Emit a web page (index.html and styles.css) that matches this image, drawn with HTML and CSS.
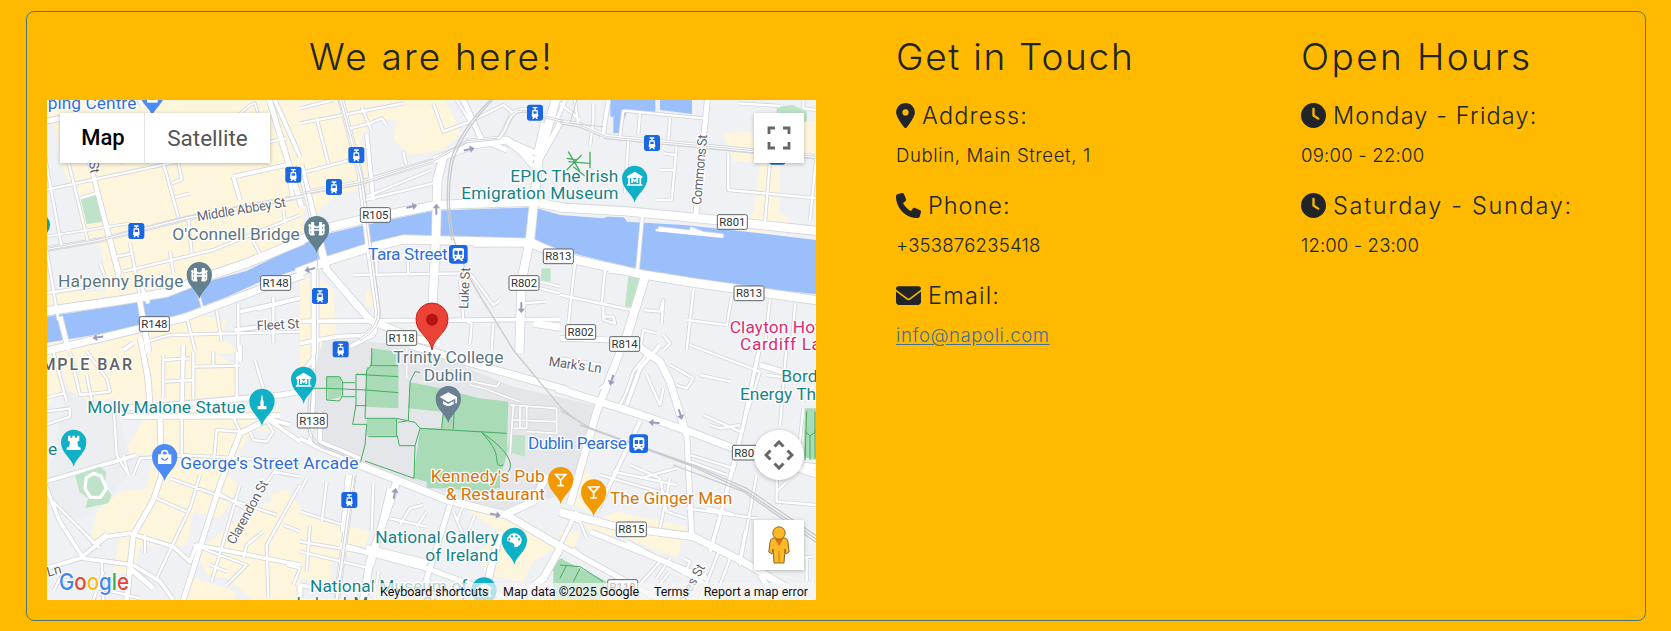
FILE: index.html
```html
<!DOCTYPE html>
<html lang="en">
<head>
<meta charset="utf-8">
<title>Contact</title>
<link rel="stylesheet" href="styles.css">
</head>
<body>
<main class="card">
<section class="find">
<h2 class="title"><span class="t-here">We are here!</span></h2>
<div class="map">
<svg class="map-canvas" viewBox="0 0 2307 1500">
<defs>
<path id="pin" d="M0 73C-6 48-38 32-38 0A38 38 0 0 1 38 0C38 32 6 48 0 73Z"/>
<g id="bridge" fill="none" stroke="#fff" stroke-width="6"><path d="M-12-20V20M12-20V20" stroke-width="9"/><path d="M-24-12Q-18-4-12-12Q0 4 12-12Q18-4 24-12M-24 4H24M-20 17H-6M6 17H20M-21-14V17M21-14V17" stroke-width="5"/></g>
<g id="museum"><path d="M-23-8L0-22L23-8V-3H-23Z" fill="#fff"/><path d="M-17-4V18M17-4V18M-23 18H23M-8 12V-1L0 7L8-1V12" fill="none" stroke="#fff" stroke-width="5"/></g>
<g id="tram"><rect x="-24" y="-24" width="48" height="48" rx="8" fill="#1967e2"/><path d="M-7-15H7M0-15V-8" stroke="#fff" stroke-width="4"/><path d="M-8-8H8L10 11L6 14L9 19H4L2 15H-2L-4 19H-9L-6 14L-10 11Z" fill="#fff"/><path d="M-5-4H5V3H-5Z" fill="#1967e2"/></g>
<g id="train"><rect x="-28" y="-28" width="56" height="56" rx="10" fill="#1967e2"/><path d="M-17-12Q-17-19-9-19H9Q17-19 17-12V9Q17 14 11 15L15 20H8L4 15H-4L-8 20H-15L-11 15Q-17 14-17 9Z" fill="#fff"/><path d="M-12-11H-2V1H-12ZM2-11H12V1H2ZM-11 6H-6V10H-11ZM6 6H11V10H6Z" fill="#1967e2"/></g>
<g id="glass" fill="none" stroke="#fff" stroke-width="5"><path d="M-15-15H15L0 2ZM0 2V18M-10 18H10"/></g>
<path id="arrow" d="M-16-3H3V-11L17 0L3 11V3H-16Z" fill="#9a9cbc"/>

<g id="streets">
<g transform="translate(-21 -30)">
<path class="w8" d="M15 200L65 470M85 215L145 460M120 325L175 308M15 300L740 145M240 215L300 205M370 220L415 380M395 280L425 268L415 220M405 322L450 310M270 460L330 780M230 500L280 490M250 545L520 480L780 375M180 520L195 560M390 485L400 550M445 385L455 490M640 455L665 500M730 360L735 400M15 610L150 590M20 480L55 690M440 680L465 780M595 640V780M700 620V760M530 660L545 755M650 660L780 625M300 760L390 735L780 725"/>
<path class="w12" d="M145 200L240 555M150 220L245 600M580 260L740 225L760 330M580 260L600 330M700 20L780 200M290 20L310 50M300 580L325 640M250 780L280 760M585 720L740 700M600 665L780 625"/>
<path class="w14" d="M60 680L85 780M300 635L325 790M685 20L785 350M15 95L60 85"/>
<path class="w7" d="M476 615L492 668M590 80L630 45L645 40L660 90M15 440L270 400"/>
<path class="w12" d="M15 478L180 450L440 385L790 318"/>
<path class="w24" d="M10 665L250 630L380 608L500 560L620 520L790 450"/>
<path class="w20" d="M10 785L250 728L430 684L560 635L680 590L790 555"/>
</g>
<g transform="translate(759 -30)">
<path class="w8" d="M0 100L310 40M50 85L85 220M0 250L170 205M150 115L210 100L245 85L260 105M185 50L215 125M310 185L318 222M195 330L400 280M400 40L430 125L510 95M470 30L510 95L610 45L640 70M160 555L500 550M230 550L228 470M320 470L325 550M480 570L490 690L515 700L510 760M510 550L580 645L600 630M580 700L575 780M670 640L735 635M660 580L780 610M200 320L395 240M660 560L780 590M425 345L780 345M100 30L0 55"/>
<path class="w12" d="M0 694L780 688M0 310L180 278L400 212M780 95L690 60Q650 55 635 75L600 145L500 155M0 760L110 740L220 735M200 690Q240 700 220 735L150 770M220 330L200 130"/>
<path class="w14" d="M122 25L180 250L205 470L232 660Q240 720 180 745M780 100L705 235M640 160L700 230M640 160L710 190L730 100M490 30L545 150L620 180"/>
<path class="w20" d="M0 225L80 540L210 690L340 745L420 760M45 540V790M400 210L520 165L620 150L700 210M520 460L700 458L780 505M700 700L780 712"/>
<path class="w24" d="M-10 455L90 412L190 388L410 345L690 335L790 352M-10 548L90 510L200 475L310 448L690 458L790 500M430 200L412 270L408 440L395 700M770 20L715 210L690 450L665 570L658 790"/>
</g>
<g transform="translate(1539 -30)">
<path class="w8" d="M45 30L55 110M100 40V90L90 170M190 60L180 140M190 62L430 85M240 70L235 130M330 85L325 150M205 150L195 310M350 170L335 330H285M310 190L345 195M300 240H340M505 190V300L770 325M630 215L615 395M770 190L750 390M535 40L660 48M730 30V55L768 60M0 40L60 90M145 545L195 550M250 660L300 665L310 630L305 700M130 640V690L165 700L160 680L130 680M400 600L380 780M515 620L500 710M380 690L500 705M630 630L615 760M705 640L695 780M45 520L25 700M135 540L125 640M0 615L215 660M290 730L250 720L240 780M310 735L330 760L310 780"/>
<path class="w12" d="M0 95L60 105L140 140L580 183L780 202M15 30L-10 90M145 30L130 130L125 145"/>
<path class="w14" d="M443 20L407 380M0 745L160 750L240 775M260 560L200 750"/>
<path class="w9" d="M247 380L232 545M295 415L490 437M390 415L430 430"/>
<path class="w24" d="M-10 352L200 364L470 390L780 424M-10 497L240 552L400 578L780 632M255 560L200 740"/>
</g>
<g transform="translate(-21 735)">
<path class="w8" d="M90 20L120 150L210 140L200 100L140 20M40 20L80 170M15 160L70 145M15 200L90 190M90 190V215L15 240M140 90L160 190M220 170L230 330M360 215V330M425 215V330M520 20V60M460 20V160M370 45L450 40M375 110L460 105M370 30V160M460 65L600 62M590 20V160M580 215L600 260L530 255L520 370M645 45L670 130M630 260L640 285L680 290L700 260L670 215M250 330L265 390M230 330L265 390M280 390L300 340L450 330M40 470L120 550L160 595L200 565M390 400L530 450L710 510M480 390L450 490L350 700M440 500L350 460M530 440L630 500M460 600L620 660L560 720M600 420L515 710M315 570V625M510 660L560 680M670 560L620 600L610 640M710 370L660 440M780 420L680 600L685 760M730 540L780 560M740 660L780 670L760 720M185 650L190 765M40 740L60 700L300 760M130 560L180 610M160 765L190 680M380 330L520 335L780 350M700 380L780 395"/>
<path class="w12" d="M15 410L240 345L290 330M15 420L60 530L130 640L280 660L360 710L400 765M310 20L335 210M430 0L425 215M750 240L680 220L780 290M600 0V50M20 670L120 640L200 575L270 565L400 605L450 650L470 600L780 660"/>
<path class="w14" d="M360 215L365 390L340 465L280 570L260 765M680 225L600 265L540 420L430 765M150 190L340 185L720 150L780 140M250 215L720 212M330 190L325 100L300 -20M270 670L340 730"/>
</g>
<g transform="translate(759 735)">
<path class="w7" d="M510 120L550 130L660 170M520 110L590 125L600 110M320 10V100M640 180L630 330M640 250L680 250L680 185M660 185V250M680 260L770 265V190L630 180M640 225L770 230"/>
<path class="w8" d="M80 410L65 530M0 500L130 540M0 620L210 670M220 415L215 560M30 540L20 680M270 520L380 545M300 540L330 490L370 480M350 545L380 500M235 680L225 760M460 500L490 570M525 510L500 570M0 590L300 640M380 680L400 765M490 480L470 530M150 720L200 740M20 400L0 440"/>
<path class="w12" d="M0 280L60 310L180 360M60 200V290L180 340M40 20V160L30 290M0 90L40 40M0 720L100 740"/>
<path class="w14" d="M160 390L110 765M145 390L130 560M270 430L215 660M120 600L380 670L640 765M450 480L360 765M0 765V720"/>
<path class="w20" d="M290 410L210 650L190 765M330 0L480 45L800 135M180 360L440 465L620 510L790 610M610 510L700 470L740 390M780 610L730 700L650 765M200 610L380 655M600 560L550 765"/>
</g>
<g transform="translate(1539 735)">
<path class="w8" d="M260 30L220 80L200 140L180 180L260 210M390 0L600 80M330 60L400 100L380 130L350 120M420 90L510 110M260 90L300 180L310 130M430 210L540 260M450 240L480 250L540 240M680 0L660 240M600 80L550 240L520 380M590 390L540 660L555 560L540 640M390 330L520 370M390 350L500 390M120 390L330 450M160 380L350 420M240 400L350 370M210 360L300 400L320 500L380 520M130 460L170 380M330 400L300 550M650 380V470L768 480M730 190L715 330M380 490L590 520M480 610L420 765M510 640L480 720M440 680L380 765M370 640L390 650L370 690M300 650L220 740M330 680L260 765M330 640L290 700M680 410L650 440M620 90L768 110M0 40L130 60M160 100L120 130M40 610L100 660M0 510L60 530L80 580M740 640V710M700 640L760 635"/>
<path class="w12" d="M150 80L120 190M200 180L240 70L300 0M240 230L110 500M0 600L50 500M600 0L550 240L490 480L450 620M200 590L460 730M440 490L520 510"/>
<path class="w14" d="M380 260L395 570M0 600L300 765M730 360L768 365M600 690L650 765M90 560L440 700M600 60L700 90"/>
<path class="w20" d="M230 0L300 50L330 110L380 270M-10 130L230 205L390 260L520 310L780 390M0 500L170 545L400 575L550 650L768 780M180 20L110 200L30 480"/>
</g>
</g>
</defs>

<rect width="2307" height="1500" fill="#f0f1f4"/>
<g class="business">
<path transform="translate(-21 -30)" d="M20 20H790V445L600 525L380 605L20 660V600L90 605H200L185 470L130 460L110 320L60 220L45 110L20 100ZM230 735L470 675L560 690L545 740L600 790H130ZM35 755H80V780H35Z"/>
<path transform="translate(759 -30)" d="M0 20H430L485 130L430 180L330 195L280 150L290 90L220 85L180 150L220 290L110 315L50 370L0 350ZM0 570L50 560L100 600L110 790H0ZM200 600L230 610L225 650H195Z"/>
<path transform="translate(1539 -30)" d="M490 130L580 125L590 215H520ZM600 215H660V370L690 385L680 400H570L585 340ZM730 95H768V210H730ZM560 415L680 435L560 425Z"/>
<path transform="translate(-21 735)" d="M60 0H310L335 25L520 20L600 70L590 150L240 180L230 160L100 170L60 60ZM330 195L720 190V260L640 255L560 380L600 430L540 520L460 500L440 600L390 605L300 600L280 690L220 680L240 560L150 590L170 500L240 440L320 430L340 330L250 325ZM600 520L740 440L780 480V765H640L560 700L500 690L470 620ZM440 690L590 740L580 765H420ZM15 60L60 70L80 130L20 180ZM690 450L750 430L740 490L700 490ZM20 0H60V50H20Z"/>
<path transform="translate(759 735)" d="M0 490L90 530L210 560L190 620L100 640L90 720L0 700ZM600 540L770 610L700 650L670 710L560 690L540 620ZM490 490L620 515L760 600L600 560ZM0 20L40 30L30 90L0 70Z"/>
<path transform="translate(1539 735)" d="M70 365L130 450L90 500L35 480ZM60 550L170 500L380 545L350 640L200 580ZM0 560L60 560L40 620L0 600Z"/>
</g>
<path fill="#e5e6ea" d="M830 715L1090 735L1400 860L1640 915L1570 1180L1350 1235L950 1090L815 1030L790 850Z"/>
<path fill="#eceef1" d="M60 870L210 940L260 1100L180 1200L100 1260L0 1230V1150Z"/>
<g fill="#a8dbb6">
<path transform="translate(759 735)" d="M215 10L295 20L290 60H210ZM200 65L295 60V190L195 185ZM330 112L400 125L540 160L625 170L620 330L600 400L575 460L340 400L360 250L425 250L430 200L325 190ZM80 95H125V155L85 165ZM200 222H290V272H200ZM380 340H600V430H380Z"/>
<path transform="translate(1539 735)" d="M0 640L140 710L120 765H0ZM735 190H768V345L730 335ZM-20 650L10 640V765H-20Z"/>
<path transform="translate(-21 -30)" d="M122 328L175 315L190 395L140 402Z" fill="#bfe3c8"/>
<path transform="translate(1539 -30)" d="M205 560L238 565L215 650H195ZM650 50L700 45L740 65V95L650 90Z" fill="#bfe3c8"/>
<path transform="translate(759 -30)" d="M725 535H752V575L722 570Z" fill="#bfe3c8"/>
<path transform="translate(759 735)" d="M630 270H675V335L620 320Z" fill="#bfe3c8"/>
</g>
<path class="water" d="M0 650L180 622L360 592L480 545L600 512L759 435L799 412L940 378L979 370L1160 332L1459 322L1539 345L1669 355L1680 350L1730 352L1740 365L1910 375L2099 395L2307 420V582L2059 558L1939 540L1739 500L1539 450L1459 422L1159 410L1039 412L950 438L849 475L739 512L629 550L540 590L410 640L230 690L0 728Z"/>
<path class="water" d="M1690 0H1825V35H1740L1715 100H1699V50H1690ZM1839 0H1935V42L1839 30Z"/>
<use href="#streets" class="casing"/>
<use href="#streets" class="surface"/>
<path transform="translate(-21 735)" d="M105 390L180 365L198 380L195 425L215 450L205 475L135 490L145 460L118 440Z" fill="#bfe3c8"/>
<path fill="none" stroke="#fff" stroke-width="10" d="M118 1133L140 1120L162 1128L178 1165L160 1192H130L114 1165Z"/>
<path d="M1826 390L2029 410" fill="none" stroke="#fff" stroke-width="8"/>
<g class="rail">
<path transform="translate(-21 -30)" d="M15 476L180 447L440 380L790 314M15 482L180 453L440 388L790 322"/>
<path transform="translate(759 -30)" d="M0 308L180 278L400 208L500 152L590 145L610 120Q630 55 670 60L790 92M0 314L180 284L400 214L500 158L600 148L620 120Q635 65 670 66L790 98M115 20L180 260L232 660Q238 710 180 745M123 20L188 260L240 660Q246 715 180 752M0 225L55 480L50 560V790"/>
<path transform="translate(1539 -30)" d="M0 95L60 105L140 140L580 182L780 200M0 101L60 111L140 146L580 188L780 206M50 30L30 100L130 110"/>
<path class="line" transform="translate(759 -30)" d="M582 25Q490 120 460 210Q435 320 462 450Q500 560 560 650L640 780Q690 840 785 955M575 25Q480 120 452 210Q430 320 455 450"/>
<path class="line" transform="translate(1539 735)" d="M0 185Q60 240 120 260L400 360L560 430L780 580M60 240L400 365L560 440L780 590M340 360L550 440L780 600M0 195L100 255"/>
<path transform="translate(759 735)" d="M165 390L115 765M158 390L105 765M33 70L20 240Q30 310 100 320L160 345M40 70L27 240Q37 305 105 315L160 340"/>
</g>
<g class="trails">
<path transform="translate(759 735)" d="M215 10V60L200 75L195 220H290L325 228L345 232L360 250L620 265M210 62H295M200 135L80 130H35M200 88H168V180L158 238H200L195 300L182 350M165 182H200M80 95H118L128 110V152L118 168L80 165ZM128 113H165M128 155H165M200 135L295 143M168 88L295 95M325 228L330 110L345 80L360 82M290 222V275H205M295 232L320 228M292 272L298 302H345L342 400L195 348M360 250L345 302M545 262Q590 310 590 340T610 360M545 262Q600 300 620 330T625 380M430 200L425 250M462 205L460 252"/>
<path transform="translate(1539 735)" d="M740 200L735 345M765 200V340M735 260L750 272L768 260M750 272V345M0 660L60 665L130 710M0 700L20 660M60 670L40 710"/>
<path transform="translate(1539 -30)" d="M25 185L60 245M65 195L20 240M25 215L90 220M90 185V235M20 205L50 210M40 230L75 258" stroke-width="4"/>
</g>
<g class="arrows">
<use href="#arrow" transform="translate(1094 320) rotate(-12)"/><use href="#arrow" transform="translate(1168 328) rotate(-90)"/><use href="#arrow" transform="translate(1266 148) rotate(-12)"/><use href="#arrow" transform="translate(789 508) rotate(165)"/><use href="#arrow" transform="translate(1423 623) rotate(90)"/><use href="#arrow" transform="translate(153 712) rotate(170)"/><use href="#arrow" transform="translate(1043 1181) rotate(-80)"/><use href="#arrow" transform="translate(1345 1244) rotate(10)"/><use href="#arrow" transform="translate(1822 968) rotate(185)"/><use href="#arrow" transform="translate(1900 943) rotate(72)"/><use href="#arrow" transform="translate(1694 840) rotate(108)"/>
</g>

<use href="#tram" x="268" y="393"/><use href="#tram" x="739" y="224"/><use href="#tram" x="928" y="165"/><use href="#tram" x="861" y="261"/><use href="#tram" x="1464" y="38"/><use href="#tram" x="1815" y="129"/><use href="#tram" x="2191" y="170"/><use href="#tram" x="819" y="588"/><use href="#tram" x="881" y="748"/><use href="#tram" x="907" y="1200"/>
<use href="#train" x="1234" y="463"/><use href="#train" x="1775" y="1031"/>

<g class="shields">
<g transform="translate(322 672)"><rect x="-45" y="-22" width="90" height="44" rx="5"/><text y="12">R148</text></g>
<g transform="translate(686 549)"><rect x="-45" y="-22" width="90" height="44" rx="5"/><text y="12">R148</text></g>
<g transform="translate(985 345)"><rect x="-45" y="-22" width="90" height="44" rx="5"/><text y="12">R105</text></g>
<g transform="translate(1534 469)"><rect x="-45" y="-22" width="90" height="44" rx="5"/><text y="12">R813</text></g>
<g transform="translate(1431 549)"><rect x="-45" y="-22" width="90" height="44" rx="5"/><text y="12">R802</text></g>
<g transform="translate(1064 714)"><rect x="-45" y="-22" width="90" height="44" rx="5"/><text y="12">R118</text></g>
<g transform="translate(2056 366)"><rect x="-45" y="-22" width="90" height="44" rx="5"/><text y="12">R801</text></g>
<g transform="translate(2106 580)"><rect x="-45" y="-22" width="90" height="44" rx="5"/><text y="12">R813</text></g>
<g transform="translate(1601 696)"><rect x="-45" y="-22" width="90" height="44" rx="5"/><text y="12">R802</text></g>
<g transform="translate(1733 732)"><rect x="-45" y="-22" width="90" height="44" rx="5"/><text y="12">R814</text></g>
<g transform="translate(796 962)"><rect x="-45" y="-22" width="90" height="44" rx="5"/><text y="12">R138</text></g>
<g transform="translate(2101 1058)"><rect x="-45" y="-22" width="90" height="44" rx="5"/><text y="12">R802</text></g>
<g transform="translate(1753 1288)"><rect x="-45" y="-22" width="90" height="44" rx="5"/><text y="12">R815</text></g>
<g transform="translate(1727 1461)"><rect x="-45" y="-22" width="90" height="44" rx="5"/><text y="12">R118</text></g>
</g>

<g class="street">
<text transform="translate(452 364) rotate(-9.5)" textLength="270">Middle Abbey St</text>
<text transform="translate(630 691) rotate(-3)" textLength="128">Fleet St</text>
<text transform="translate(1263 627) rotate(-87)" textLength="124">Luke St</text>
<text transform="translate(1962 316) rotate(-85)" textLength="212">Commons St</text>
<text transform="translate(1504 797) rotate(8)" textLength="160">Mark's Ln</text>
<text transform="translate(562 1336) rotate(-61)" textLength="212">Clarendon St</text>
<text transform="translate(3 1430) rotate(-15)">Ln</text>
<text transform="translate(126 185) rotate(82)">St</text>
<text transform="translate(1912 1515) rotate(-61)" textLength="130">olles St</text>
</g>

<g class="place">
<text class="blue" x="2" y="26" textLength="266">ping Centre</text>
<text class="slate" x="376" y="421" textLength="382">O'Connell Bridge</text>
<text class="slate" x="33" y="560" textLength="376">Ha'penny Bridge</text>
<text class="blue" x="963" y="481" textLength="239">Tara Street</text>
<text class="teal" x="1390" y="245" textLength="324">EPIC The Irish</text>
<text class="teal" x="1243" y="297" textLength="471">Emigration Museum</text>
<text class="slate" x="1039" y="790" textLength="330">Trinity College</text>
<text class="slate" x="1130" y="842" textLength="145">Dublin</text>
<text class="teal" x="121" y="940" textLength="474">Molly Malone Statue</text>
<text class="teal" x="3" y="1064">e</text>
<text class="blue" x="400" y="1107" textLength="534">George's Street Arcade</text>
<text class="orange" x="1151" y="1147" textLength="342">Kennedy's Pub</text>
<text class="orange" x="1196" y="1200" textLength="298">&amp; Restaurant</text>
<text class="orange" x="1689" y="1211" textLength="367">The Ginger Man</text>
<text class="blue" x="1443" y="1048" textLength="297">Dublin Pearse</text>
<text class="teal" x="985" y="1330" textLength="370">National Gallery</text>
<text class="teal" x="1135" y="1383" textLength="219">of Ireland</text>
<text class="teal" x="789" y="1476" textLength="472">National Museum of</text>
<text class="teal" x="748" y="1528" textLength="510">Ireland, Museum Street</text>
<text class="pink" x="2048" y="698" textLength="315">Clayton Hotel</text>
<text class="pink" x="2079" y="750" textLength="303">Cardiff Lane</text>
<text class="teal" x="2203" y="847">Bord Gáis</text>
<text class="teal" x="2079" y="900">Energy Theatre</text>
<text class="district" x="-50" y="811" textLength="305">EMPLE BAR</text>
</g>

<use href="#pin" x="457" y="524" fill="#62808e"/><use href="#bridge" x="457" y="524"/>
<use href="#pin" x="809" y="386" fill="#62808e"/><use href="#bridge" x="809" y="386"/>
<use href="#pin" x="316" y="-24" fill="#4c8bf5"/><path d="M300-25H332V8H300Z" fill="#fff"/><path d="M307-9Q316 4 325-9" fill="none" stroke="#4c8bf5" stroke-width="4"/>
<use href="#pin" x="1763" y="235" fill="#10b0c6"/><use href="#museum" x="1763" y="237"/>
<use href="#pin" x="770" y="838" fill="#10b0c6"/><use href="#museum" x="770" y="840"/>
<use href="#pin" x="645" y="904" fill="#10b0c6"/><path d="M645 882L650 907V918H658V928H632V918H640V907Z" fill="#fff"/>
<use href="#pin" x="80" y="1027" fill="#10b0c6"/><path d="M63 1007H70V1013H76V1007H84V1013H90V1007H97V1022L91 1025L93 1039L101 1043V1050H59V1043L67 1039L69 1025L63 1022Z" fill="#fff"/>
<use href="#pin" x="353" y="1070" fill="#4c8bf5"/><path d="M333 1063H373V1092H333Z" fill="#fff"/><path d="M344 1065V1061Q344 1052 353 1052T362 1061V1065" fill="none" stroke="#fff" stroke-width="5"/><path d="M343 1074Q353 1087 363 1074" fill="none" stroke="#4c8bf5" stroke-width="4"/>
<use href="#pin" x="1204" y="896" fill="#6b7f92"/><path d="M1178 891L1204 877L1230 891V910H1225V896L1204 907ZM1188 903L1204 912L1220 903V912Q1204 925 1188 912Z" fill="#fff"/>
<use href="#pin" x="1541" y="1139" fill="#f29900"/><use href="#glass" x="1541" y="1139"/>
<use href="#pin" x="1640" y="1176" fill="#f29900"/><use href="#glass" x="1640" y="1176"/>
<use href="#pin" x="1402" y="1321" fill="#10b0c6"/><path d="M1380 1321A22 21 0 1 1 1402 1342Q1404 1331 1397 1329T1380 1321Z" fill="#fff"/><path d="M1387 1318h.1M1395 1309h.1M1408 1309h.1M1416 1318h.1" stroke="#10b0c6" stroke-width="7" stroke-linecap="round"/>
<use href="#pin" x="1311" y="1470" fill="#10b0c6"/><use href="#museum" x="1311" y="1470"/>
<circle cx="-28" cy="375" r="37" fill="#10a08e"/>
<path d="M1155 750C1150 710 1107 700 1107 657A48 48 0 0 1 1203 657C1203 700 1160 710 1155 750Z" fill="#ea4335" stroke="#c5221f" stroke-width="3"/><circle cx="1155" cy="659" r="18" fill="#b31412"/>
<text class="google" x="36" y="1470" textLength="210" lengthAdjust="spacingAndGlyphs"><tspan fill="#4285f4">G</tspan><tspan fill="#ea4335">o</tspan><tspan fill="#fbbc04">o</tspan><tspan fill="#4285f4">g</tspan><tspan fill="#34a853">l</tspan><tspan fill="#ea4335">e</tspan></text>
</svg>
<div class="types"><button class="type on">Map</button><button class="type">Satellite</button></div>
<button class="tool full" aria-label="Fullscreen"><svg viewBox="0 0 24 24"><path d="M2 8V2H8M16 2H22V8M22 16V22H16M8 22H2V16" fill="none" stroke="#666" stroke-width="2.8"/></svg></button>
<button class="tool camera" aria-label="Camera"><svg viewBox="-15 -15 30 30"><path d="M-4.500-8.500L0-13L4.500-8.500M-4.500 8.500L0 13L4.500 8.500M-8.500-4.500L-13 0L-8.500 4.500M8.500-4.500L13 0L8.500 4.500" fill="none" stroke="#666" stroke-width="3"/></svg></button>
<button class="tool pegman" aria-label="Street View"><svg viewBox="0 0 22 38"><path d="M5 12Q2 13 2 16L.8 26L4 28L5 23L6 37H16L17 23L18 28L21.2 26L20 16Q20 13 17 12Z" fill="#fbb829" stroke="#8d6a21"/><path d="M7 13H15L11 20Z" fill="#e06c14"/><path d="M11 25V37" stroke="#c17f12"/><circle cx="11" cy="7" r="6.2" fill="#fbb829" stroke="#8d6a21"/></svg></button>
<div class="legal"><span>Keyboard shortcuts</span><span>Map data ©2025 Google</span><span>Terms</span><span>Report a map error</span></div>
</div>
</section>
<section class="touch">
<h2 class="title"><span class="t-touch">Get in Touch</span></h2>
<h5 class="sub"><svg class="icon pinicon" viewBox="0 0 384 512"><path d="M215.7 499.2C267 435 384 279.4 384 192C384 86 298 0 192 0S0 86 0 192c0 87.400 117 243 168.300 307.200c12.300 15.300 35.100 15.300 47.400 0zM192 128a64 64 0 1 1 0 128 64 64 0 1 1 0-128z"/></svg><span class="s-address">Address:</span></h5>
<p class="info i-address">Dublin, Main Street, 1</p>
<h5 class="sub"><svg class="icon" viewBox="0 0 512 512"><path d="M164.900 24.600c-7.700-18.600-28-28.500-47.400-23.200l-88 24C12.100 30.200 0 46 0 64C0 311.400 200.600 512 448 512c18 0 33.800-12.100 38.600-29.500l24-88c5.300-19.400-4.600-39.700-23.200-47.400l-96-40c-16.300-6.800-35.200-2.100-46.300 11.600L304.700 368C234.300 334.700 177.300 277.700 144 207.300L193.300 167c13.700-11.200 18.400-30 11.600-46.300l-40-96z"/></svg><span class="s-phone">Phone:</span></h5>
<p class="info i-phone">+353876235418</p>
<h5 class="sub"><svg class="icon" viewBox="0 0 512 512"><path d="M48 64C21.500 64 0 85.500 0 112c0 15.100 7.100 29.300 19.200 38.400L236.800 313.600c11.400 8.500 27 8.500 38.400 0L492.800 150.400c12.100-9.100 19.200-23.300 19.200-38.400c0-26.500-21.500-48-48-48H48zM0 176V384c0 35.300 28.700 64 64 64H448c35.300 0 64-28.700 64-64V176L294.400 339.200c-22.800 17.100-54 17.100-76.800 0L0 176z"/></svg><span class="s-email">Email:</span></h5>
<p class="info"><a class="mail" href="#">info@napoli.com</a></p>
</section>
<section class="hours">
<h2 class="title"><span class="t-hours">Open Hours</span></h2>
<h5 class="sub"><svg class="icon" viewBox="0 0 512 512"><path d="M256 0a256 256 0 1 1 0 512A256 256 0 1 1 256 0zM232 120V256c0 8 4 15.500 10.700 20l96 64c11 7.400 25.900 4.400 33.300-6.700s4.400-25.900-6.700-33.300L280 243.200V120c0-13.300-10.700-24-24-24s-24 10.700-24 24z"/></svg><span class="s-week">Monday - Friday:</span></h5>
<p class="info i-week">09:00 - 22:00</p>
<h5 class="sub"><svg class="icon" viewBox="0 0 512 512"><path d="M256 0a256 256 0 1 1 0 512A256 256 0 1 1 256 0zM232 120V256c0 8 4 15.500 10.700 20l96 64c11 7.400 25.900 4.400 33.300-6.700s4.400-25.900-6.700-33.300L280 243.200V120c0-13.300-10.700-24-24-24s-24 10.700-24 24z"/></svg><span class="s-end">Saturday - Sunday:</span></h5>
<p class="info i-end">12:00 - 23:00</p>
</section>
</main>
</body>
</html>
```
FILE: styles.css
```css
* { box-sizing: border-box; }
body { margin: 0; background: #ffba00; color: #212529; font-family: Inter, "Liberation Sans", sans-serif; font-weight: 300; }
.card { display: grid; grid-template-columns: 849px 405px 1fr; height: 610px; margin: 11px 25px 0 26px; padding: 20px 0 0 20px; border: 1px solid #4f7670; border-radius: 8px; }
.find { width: 769px; }
.title { display: flex; height: 68px; margin: 0; padding-top: 3px; font-size: 37px; line-height: 44px; font-weight: 300; white-space: nowrap; }
.find .title { justify-content: center; }
.sub { display: flex; align-items: center; gap: 7px; height: 32px; margin: -1px 0 0; font-size: 23.500px; line-height: 32px; font-weight: 300; white-space: nowrap; }
.sub span { padding-top: 1px; }
.info { height: 28px; margin: 10px 0 21px; font-size: 18.600px; line-height: 28px; white-space: nowrap; }
.icon { width: 25px; height: 25px; flex: none; fill: #212529; }
.pinicon { width: 19px; }
.mail { color: #3f719b; letter-spacing: .55px; text-decoration: underline; text-underline-offset: 2px; }
.t-here { letter-spacing: 2.2px; }
.t-touch { letter-spacing: 1.7px; }
.t-hours { letter-spacing: 2.4px; }
.s-address { letter-spacing: 1.2px; }
.s-phone { letter-spacing: 1px; }
.s-email { letter-spacing: 1.2px; }
.s-week { letter-spacing: 1.150px; }
.s-end { letter-spacing: 1.7px; }
.i-address { letter-spacing: .6px; }
.i-phone { letter-spacing: .2px; }
.i-week { letter-spacing: .2px; }
.i-end { letter-spacing: .1px; }

.map { position: relative; width: 769px; height: 500px; overflow: hidden; }
.map-canvas { display: block; width: 769px; height: 500px; font-family: Roboto, sans-serif; font-weight: 400; }
.business { fill: #fdf5dc; }
.water { fill: #9bbffa; }
.casing { stroke: #d3d6dc; --extra: 5px; }
.surface { stroke: #fff; --extra: 0px; }
#streets { fill: none; stroke-linejoin: round; }
.w7 { stroke-width: calc(5px + var(--extra)); }
.w8 { stroke-width: calc(7px + var(--extra)); }
.w9 { stroke-width: calc(9px + var(--extra)); }
.w12 { stroke-width: calc(11px + var(--extra)); }
.w14 { stroke-width: calc(15px + var(--extra)); }
.w20 { stroke-width: calc(21px + var(--extra)); }
.w24 { stroke-width: calc(25px + var(--extra)); }
.rail { fill: none; stroke: #c9cbd1; stroke-width: 2.5; }
.line { stroke-width: 4; }
.trails { fill: none; stroke: #46ad62; stroke-width: 3; }
.shields rect { fill: #fff; stroke: #5f6368; stroke-width: 3; }
.shields text { font-size: 34px; text-anchor: middle; fill: #303134; }
.street text { font-size: 40px; fill: #5f6368; stroke: #fff; stroke-width: 7px; paint-order: stroke; }
.place text { font-size: 52px; stroke: #fff; stroke-width: 8px; stroke-linejoin: round; paint-order: stroke; }
.place .district { font-size: 48px; font-weight: 500; fill: #5f6368; }
.blue { fill: #2f6fdb; }
.slate { fill: #5a7684; }
.teal { fill: #168389; }
.orange { fill: #d57408; }
.pink { fill: #dc2c72; }
.google { font-family: Inter, sans-serif; font-weight: 500; font-size: 68px; stroke: #fff; stroke-width: 5px; paint-order: stroke; }

.types { position: absolute; left: 13px; top: 13px; display: flex; box-shadow: 0 1px 4px rgba(0,0,0,.25); }
.type { width: 125px; height: 50px; padding: 0 0 1px; border: 0; background: #fff; color: #565656; font: 400 22.500px Roboto, sans-serif; }
.on { width: 85px; padding-left: 2px; color: #000; font-weight: 500; font-size: 22px; border-right: 1px solid #e5e5e5; }
.tool { position: absolute; left: 707px; display: flex; align-items: center; justify-content: center; width: 50px; height: 50px; padding: 0; border: 0; background: #fff; box-shadow: 0 1px 4px rgba(0,0,0,.25); }
.full { top: 13px; }
.full svg { width: 24px; height: 24px; }
.camera { top: 330px; border-radius: 50%; }
.camera svg { width: 30px; height: 30px; }
.pegman { top: 420px; }
.pegman svg { width: 22px; height: 38px; }
.legal { position: absolute; right: 0; bottom: 0; display: flex; justify-content: space-between; width: 443px; height: 17px; padding: 0 8px 0 7px; background: rgba(245,245,245,.72); color: #111; font: 400 12.500px/17px Roboto, sans-serif; white-space: nowrap; }
```
